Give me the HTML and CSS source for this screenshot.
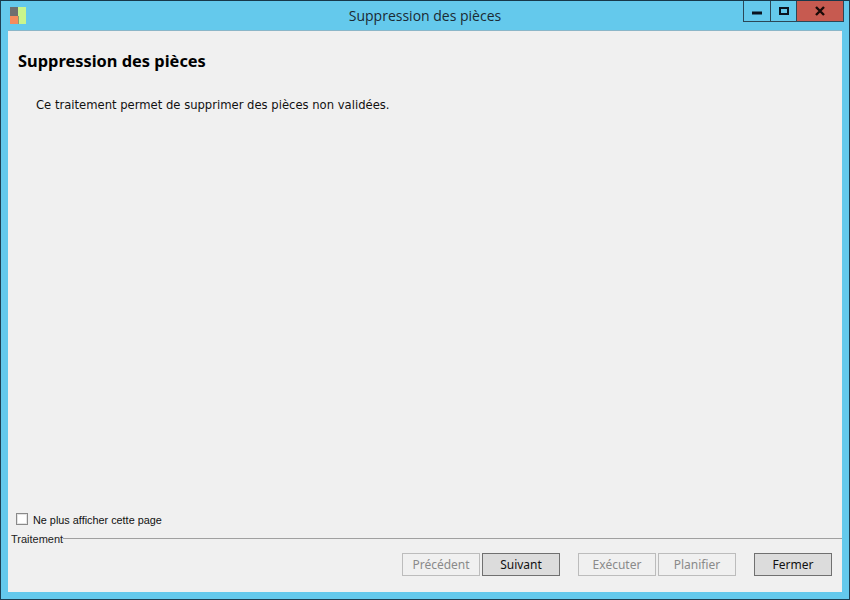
FILE: index.html
```html
<!DOCTYPE html>
<html lang="fr">
<head>
<meta charset="utf-8">
<title>Suppression des pièces</title>
<link rel="stylesheet" href="styles.css">
</head>
<body>
<div class="window">
  <header class="titlebar">
    <div class="app-icon">
      <svg width="17" height="17" viewBox="0 0 17 17"><rect x="0" y="0" width="8" height="9" fill="#6f6f6f"/><rect x="0" y="9" width="8" height="8" fill="#f58b5c"/><rect x="8" y="0" width="8" height="17" fill="#c9f58c"/><rect x="8" y="9" width="1" height="8" fill="#8d9a70"/></svg>
    </div>
    <div class="title">Suppression des pièces</div>
    <div class="caption">
      <div class="cap cap-min"><svg width="12" height="12" viewBox="0 0 12 12"><rect x="1" y="6.5" width="10" height="3" fill="#0b1420"/></svg></div>
      <div class="cap cap-max"><svg width="12" height="12" viewBox="0 0 12 12"><path d="M1 2h10v8H1z M3 4v4h6V4z" fill="#0b1420" fill-rule="evenodd"/></svg></div>
      <div class="cap cap-close"><svg width="12" height="12" viewBox="0 0 12 12"><path d="M2 2l8 8M10 2l-8 8" stroke="#1a0a08" stroke-width="2.4" fill="none"/></svg></div>
    </div>
  </header>
  <main class="client">
    <div class="page">
      <h1 class="heading">Suppression des pièces</h1>
      <p class="desc">Ce traitement permet de supprimer des pièces non validées.</p>
    </div>
    <label class="check"><span class="box"></span><span class="check-label">Ne plus afficher cette page</span></label>
    <div class="group">
      <span class="group-label">Traitement</span>
      <span class="group-line"></span>
    </div>
    <footer class="actions">
      <div class="btn-group">
        <button class="btn is-disabled">Précédent</button>
        <button class="btn">Suivant</button>
      </div>
      <div class="btn-group">
        <button class="btn is-disabled">Exécuter</button>
        <button class="btn is-disabled">Planifier</button>
      </div>
      <button class="btn">Fermer</button>
    </footer>
  </main>
</div>
</body>
</html>
```

FILE: styles.css
```css
* { box-sizing: border-box; }
html, body { margin: 0; padding: 0; }
body { width: 850px; height: 600px; overflow: hidden; background: #64c9ec; }
.window {
  width: 850px; height: 600px;
  display: flex; flex-direction: column;
  background: #64c9ec;
  border: 1px solid #1d3f52;
  border-top-color: #17384a;
  padding: 0 7px 7px;
}
.titlebar {
  height: 29px; flex: none;
  display: grid; grid-template-columns: 1fr auto 1fr;
  align-items: start;
}
.app-icon { padding: 6px 0 0 2px; height: 23px; }
.app-icon svg { display: block; }
.title {
  font: 14px/30px "Open Sans", "Noto Sans", sans-serif;
  color: #1b2a33;
}
.caption { justify-self: end; display: flex; margin-right: -2px; }
.cap {
  height: 21px;
  display: flex; align-items: center; justify-content: center;
  border: 1px solid #2b4757; border-top: none; border-left: none;
}
.cap-min { width: 28px; border-left: 1px solid #2b4757; }
.cap-max { width: 26px; }
.cap-close { width: 47px; background: #c75a50; }
.client {
  flex: 1; min-height: 0;
  display: flex; flex-direction: column;
  background: #f0f0f0;
  border-top: 1px solid #8bb6c8;
  font-family: "DejaVu Sans", "Liberation Sans", sans-serif;
  color: #111;
}
.page { flex: 1; min-height: 0; padding: 20px 10px 0; }
.heading {
  margin: 0; font-size: 16.4px; line-height: 20px; font-weight: 700;
  font-family: "Noto Sans", "DejaVu Sans", sans-serif; color: #000;
}
.desc { margin: 26px 0 0 18px; font-size: 11.6px; line-height: 16px; }
.check { display: flex; align-items: center; gap: 5px; padding-left: 8px; height: 16px; margin-bottom: 5px; }
.box { width: 12px; height: 12px; background: #fff; border: 1px solid #8a8a8a; box-shadow: inset 0 0 0 1px #e4e4e4; }
.check-label { font-family: "Liberation Sans", sans-serif; font-size: 10.85px; line-height: 16px; padding-top: 1px; }
.group { display: flex; align-items: center; height: 14px; padding-left: 3px; }
.group-label { font-family: "Liberation Sans", sans-serif; font-size: 11px; line-height: 14px; color: #222; }
.group-line { flex: 1; height: 1px; background: #a0a0a0; margin-top: -2px; }
.actions {
  display: flex; justify-content: flex-end; align-items: center;
  gap: 18px; padding: 7px 10px 16px 0;
}
.btn-group { display: flex; gap: 2px; }
.btn {
  width: 78px; height: 23px; padding: 0;
  background: #dcdcdc; border: 1px solid #707070; border-radius: 0;
  font-family: "Noto Sans", sans-serif; font-size: 12px; color: #111;
}
.btn.is-disabled { background: #f0f0f0; border-color: #bcbcbc; color: #8a8a8a; }
```
